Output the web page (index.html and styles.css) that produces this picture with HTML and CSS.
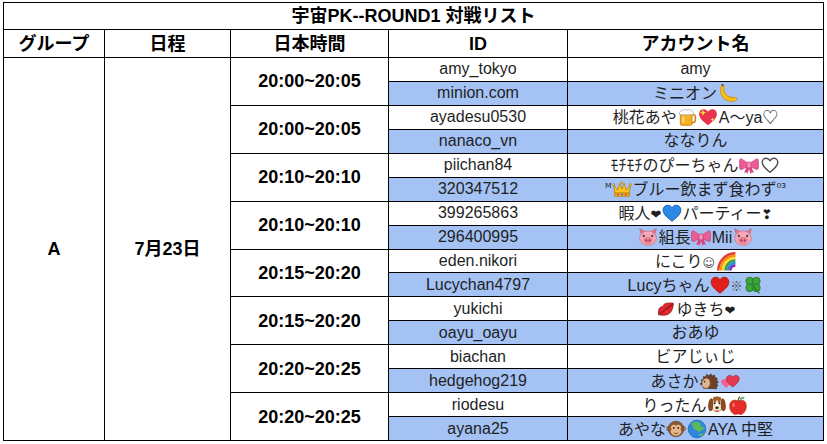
FILE: index.html
```html
<!DOCTYPE html>
<html lang="ja">
<head>
<meta charset="utf-8">
<title>宇宙PK--ROUND1 対戦リスト</title>
<link rel="stylesheet" href="styles.css">
</head>
<body>
<svg class="defs" xmlns="http://www.w3.org/2000/svg" aria-hidden="true">
  <symbol id="heart" viewBox="0 0 36 36">
    <path d="M18 33C12 28 2 21 2 12.5 2 7.5 6 4 10.5 4c3.3 0 5.8 2 7.5 4.5C19.7 6 22.2 4 25.5 4 30 4 34 7.5 34 12.5 34 21 24 28 18 33z"/>
  </symbol>
  <symbol id="e-banana" viewBox="0 0 36 36">
    <path d="M8 4c2 0 3 1 3 3s-1 3 0 7c2 8 9 12 18 12 3 0 5 1 5 3s-3 4-9 4C12 33 4 23 5 12c0-4 1-8 3-8z" fill="#fcc21b" stroke="#c68b0b" stroke-width="1.5"/>
    <path d="M9 12c1 9 8 15 18 16" fill="none" stroke="#e8a010" stroke-width="1.5"/>
    <rect x="6.5" y="2" width="3.5" height="4" rx="1" fill="#6b4a1e"/>
  </symbol>
  <symbol id="e-beer" viewBox="0 0 36 36">
    <path d="M26 14h3a4 4 0 0 1 4 4v6a4 4 0 0 1-4 4h-3" fill="none" stroke="#d08a10" stroke-width="3"/>
    <rect x="6" y="11" width="21" height="22" rx="3" fill="#f7b125" stroke="#c07a0a" stroke-width="1.5"/>
    <rect x="10" y="17" width="3" height="12" rx="1.5" fill="#fde08a"/>
    <path d="M5 14c-2-4 1-8 5-7 1-3 6-4 8-1 2-2 7-2 8 1 4 0 5 5 2 7z" fill="#fff" stroke="#9a9a9a" stroke-width="1.2"/>
  </symbol>
  <symbol id="e-sheart" viewBox="0 0 36 36">
    <use href="#heart" fill="#e8334a"/>
    <path d="M9 4l1.6 4.4L15 10l-4.4 1.6L9 16l-1.6-4.4L3 10l4.4-1.6z" fill="#ffd83b"/>
    <path d="M26 19l1 2.6 2.6 1-2.6 1-1 2.6-1-2.6-2.6-1 2.6-1z" fill="#ffe98a"/>
  </symbol>
  <symbol id="e-ribbon" viewBox="0 0 36 36">
    <path d="M15 19l-6 13 4-1 2 3 5-14z M21 19l6 13-4-1-2 3-5-14z" fill="#d6457f"/>
    <path d="M18 16L5 7c-2.5-1-4 1-4 3v13c0 2 1.5 4 4 3l13-6z" fill="#ea5c96" stroke="#c2306b" stroke-width="1"/>
    <path d="M18 16L31 7c2.5-1 4 1 4 3v13c0 2-1.5 4-4 3l-13-6z" fill="#ea5c96" stroke="#c2306b" stroke-width="1"/>
    <rect x="14" y="12.5" width="8" height="11" rx="3" fill="#f48fb8" stroke="#c2306b" stroke-width="1.2"/>
  </symbol>
  <symbol id="e-wheart" viewBox="0 0 36 36">
    <path d="M18 31C12.5 26.5 4 20.5 4 13c0-4 3.2-7 7-7 3 0 5.3 1.8 7 4.2C19.7 7.8 22 6 25 6c3.8 0 7 3 7 7 0 7.5-8.5 13.5-14 18z" fill="#fff" stroke="#4a4a4a" stroke-width="2.6"/>
  </symbol>
  <symbol id="e-crown" viewBox="0 0 36 36">
    <path d="M3 11l7 9 4-12 4 10 4-10 4 12 7-9-2 16H5z" fill="#fcc21b" stroke="#b07a08" stroke-width="1.3" stroke-linejoin="round"/>
    <rect x="5" y="25" width="26" height="6" fill="#f6a81c" stroke="#b07a08" stroke-width="1.3"/>
    <circle cx="3" cy="10" r="2" fill="#fcc21b" stroke="#b07a08"/>
    <circle cx="33" cy="10" r="2" fill="#fcc21b" stroke="#b07a08"/>
    <circle cx="18" cy="7" r="2" fill="#fcc21b" stroke="#b07a08"/>
    <circle cx="11" cy="28" r="1.8" fill="#e53935"/>
    <circle cx="18" cy="28" r="1.8" fill="#1e88e5"/>
    <circle cx="25" cy="28" r="1.8" fill="#e53935"/>
  </symbol>
  <symbol id="e-bheart" viewBox="0 0 36 36">
    <use href="#heart" fill="#2b8ae6" stroke="#0b4f9c" stroke-width="1.5"/>
  </symbol>
  <symbol id="e-rheart" viewBox="0 0 36 36">
    <use href="#heart" fill="#e0201b" stroke="#9c1010" stroke-width="1.2"/>
  </symbol>
  <symbol id="e-pig" viewBox="0 0 36 36">
    <path d="M3 3l11 6-7 8z M33 3l-11 6 7 8z" fill="#e6778c" stroke="#b9566a" stroke-width="1"/>
    <ellipse cx="18" cy="20" rx="15" ry="13" fill="#f7a8b8" stroke="#c9667a" stroke-width="1.2"/>
    <ellipse cx="18" cy="24" rx="7.5" ry="5.2" fill="#ee8598" stroke="#c9667a"/>
    <ellipse cx="15.3" cy="24" rx="1.4" ry="2.1" fill="#8a2c3f"/>
    <ellipse cx="20.7" cy="24" rx="1.4" ry="2.1" fill="#8a2c3f"/>
    <circle cx="10.5" cy="16" r="1.9" fill="#333"/>
    <circle cx="25.5" cy="16" r="1.9" fill="#333"/>
  </symbol>
  <symbol id="e-rainbow" viewBox="0 0 36 36">
    <g fill="none" stroke-width="4.4">
      <path d="M4 35A31 31 0 0 1 35 4" stroke="#e53935"/>
      <path d="M8.4 35A26.6 26.6 0 0 1 35 8.4" stroke="#fb8c00"/>
      <path d="M12.8 35A22.2 22.2 0 0 1 35 12.8" stroke="#fdd835"/>
      <path d="M17.2 35A17.8 17.8 0 0 1 35 17.2" stroke="#43a047"/>
      <path d="M21.6 35A13.4 13.4 0 0 1 35 21.6" stroke="#1e88e5"/>
      <path d="M26 35A9 9 0 0 1 35 26" stroke="#8e24aa"/>
    </g>
  </symbol>
  <symbol id="e-clover" viewBox="0 0 36 36">
    <g fill="#3aa53a" stroke="#1f6b1f" stroke-width="1.2">
      <circle cx="12" cy="11" r="7"/>
      <circle cx="24" cy="11" r="7"/>
      <circle cx="12" cy="23" r="7"/>
      <circle cx="24" cy="23" r="7"/>
    </g>
    <circle cx="18" cy="17" r="3" fill="#2e8b2e"/>
    <path d="M20 22c3 5 6 8 10 11" fill="none" stroke="#1f6b1f" stroke-width="2"/>
  </symbol>
  <symbol id="e-kiss" viewBox="0 0 36 36">
    <g transform="rotate(-38 18 18)">
      <path d="M1 18c5-8 10-10 13-8 2 1 3 1 4 0 3-2 9 0 17 8-6 7-12 10-17 10S7 25 1 18z" fill="#e0282e" stroke="#8b0f14" stroke-width="1.2"/>
      <path d="M3 18c5 1 10 1.5 15 0 5 1.5 10 1 15 0" stroke="#8b0f14" stroke-width="1.8" fill="none"/>
    </g>
  </symbol>
  <symbol id="e-hedgehog" viewBox="0 0 36 36">
    <path d="M8 31l-2-6 -3-1 3-4-2-4 4-1 0-5 4 1 2-5 4 3 3-4 3 4 4-2 1 5 4 1-1 4 3 3-3 3 2 4-3 2 1 3z" fill="#6b4226" stroke="#3e2410" stroke-width="1"/>
    <path d="M5 24c0-7 4-11 9-11 4 0 6 4 6 9 0 6-4 9-8 9-4 0-7-3-7-7z" fill="#e2b48a" stroke="#8a5a35" stroke-width="1"/>
    <circle cx="4" cy="23" r="1.8" fill="#222"/>
    <circle cx="10" cy="19" r="1.5" fill="#222"/>
  </symbol>
  <symbol id="e-twohearts" viewBox="0 0 36 36">
    <use href="#heart" x="0" y="0" width="20" height="20" transform="translate(1 12)" fill="#f06292"/>
    <use href="#heart" width="26" height="26" transform="translate(10 5)" fill="#e53950" stroke="#a5162b" stroke-width="1.5"/>
  </symbol>
  <symbol id="e-dog" viewBox="0 0 36 36">
    <ellipse cx="18" cy="17" rx="11" ry="13" fill="#f3e3cf" stroke="#7a4a22" stroke-width="1"/>
    <path d="M11 4c4-2 10-2 14 0 1 4-1 7-2 10h-10c-1-3-3-6-2-10z" fill="#a0612a"/>
    <path d="M8 6c-4 1-6 8-6 15 0 5 2 8 5 8 3 0 4-5 4-10 0-6 1-10-3-13z" fill="#8a4b21"/>
    <path d="M28 6c4 1 6 8 6 15 0 5-2 8-5 8-3 0-4-5-4-10 0-6-1-10 3-13z" fill="#8a4b21"/>
    <rect x="16.5" y="10" width="3" height="14" fill="#fff"/>
    <circle cx="13.5" cy="15" r="1.7" fill="#222"/>
    <circle cx="22.5" cy="15" r="1.7" fill="#222"/>
    <ellipse cx="18" cy="23" rx="3" ry="2.2" fill="#222"/>
    <path d="M15 28c1 4 5 4 6 0z" fill="#e53935"/>
  </symbol>
  <symbol id="e-apple" viewBox="0 0 36 36">
    <path d="M18 11c-4-3-15-3-15 9 0 9 6 15 10 15 2 0 3-1 5-1s3 1 5 1c4 0 10-6 10-15 0-12-11-12-15-9z" fill="#e52d27" stroke="#a5160f" stroke-width="1"/>
    <path d="M18 11c0-3 1-6 3-8" stroke="#6b3e1a" stroke-width="2" fill="none"/>
    <path d="M20 8c2-4 7-5 10-4-1 3-6 5-10 4z" fill="#4caf50"/>
    <ellipse cx="10" cy="18" rx="2" ry="3.5" fill="#ff8a80"/>
  </symbol>
  <symbol id="e-monkey" viewBox="0 0 36 36">
    <circle cx="5" cy="17" r="4.5" fill="#8a5a35"/>
    <circle cx="31" cy="17" r="4.5" fill="#8a5a35"/>
    <circle cx="5" cy="17" r="2.3" fill="#e6b98a"/>
    <circle cx="31" cy="17" r="2.3" fill="#e6b98a"/>
    <circle cx="18" cy="18" r="14" fill="#8a5a35" stroke="#5a3418" stroke-width="1"/>
    <path d="M18 12c-3-3-9-2-9 3 0 2 1 3 1 4-2 2-2 5 0 7 2 3 5 4 8 4s6-1 8-4c2-2 2-5 0-7 0-1 1-2 1-4 0-5-6-6-9-3z" fill="#e6b98a"/>
    <circle cx="14" cy="16" r="1.6" fill="#222"/>
    <circle cx="22" cy="16" r="1.6" fill="#222"/>
    <path d="M14 25c2 1.5 6 1.5 8 0" stroke="#5a3418" stroke-width="1.4" fill="none"/>
  </symbol>
  <symbol id="e-globe" viewBox="0 0 36 36">
    <circle cx="18" cy="18" r="16" fill="#2e86de" stroke="#1a5a9a" stroke-width="1"/>
    <path d="M9 7c4-2 10-3 14 0 3 2 1 5 3 7s5 0 6 3c-1 2-4 3-6 2-2 2-1 5-4 5-2-1-3-4-6-4-3 0-5-2-5-5s-4-4-2-8z" fill="#5cb85c"/>
    <path d="M22 27c2-2 6-2 7 0 0 2-3 4-5 4-2-1-3-2-2-4z" fill="#5cb85c"/>
  </symbol>
</svg>

<div class="sheet">
  <div class="cell title">宇宙PK--ROUND1 対戦リスト</div>

  <div class="cell head">グループ</div>
  <div class="cell head">日程</div>
  <div class="cell head">日本時間</div>
  <div class="cell head">ID</div>
  <div class="cell head">アカウント名</div>

  <div class="cell big span16">A</div>
  <div class="cell big span16">7月23日</div>

  <div class="cell big span2">20:00~20:05</div>
  <div class="cell">amy_tokyo</div>
  <div class="cell">amy</div>
  <div class="cell blue">minion.com</div>
  <div class="cell blue"><span>ミニオン<svg class="emo"><use href="#e-banana"/></svg></span></div>

  <div class="cell big span2">20:00~20:05</div>
  <div class="cell">ayadesu0530</div>
  <div class="cell"><span>桃花あや<svg class="emo"><use href="#e-beer"/></svg><svg class="emo"><use href="#e-sheart"/></svg>A～ya♡</span></div>
  <div class="cell blue">nanaco_vn</div>
  <div class="cell blue">ななりん</div>

  <div class="cell big span2">20:10~20:10</div>
  <div class="cell">piichan84</div>
  <div class="cell"><span>ﾓﾁﾓﾁのぴーちゃん<svg class="emo"><use href="#e-ribbon"/></svg><svg class="emo"><use href="#e-wheart"/></svg></span></div>
  <div class="cell blue">320347512</div>
  <div class="cell blue"><span><span class="sup">ᴹ</span><svg class="emo"><use href="#e-crown"/></svg>ブルー飲まず食わず<span class="sup">⁰³</span></span></div>

  <div class="cell big span2">20:10~20:10</div>
  <div class="cell">399265863</div>
  <div class="cell"><span>暇人<span class="sym">❤&#xFE0E;</span><svg class="emo"><use href="#e-bheart"/></svg>パーティー<span class="sym">❣&#xFE0E;</span></span></div>
  <div class="cell blue">296400995</div>
  <div class="cell blue"><span><svg class="emo"><use href="#e-pig"/></svg>組長<svg class="emo"><use href="#e-ribbon"/></svg>Mii<svg class="emo"><use href="#e-pig"/></svg></span></div>

  <div class="cell big span2">20:15~20:20</div>
  <div class="cell">eden.nikori</div>
  <div class="cell"><span>にこり<span class="sym small">☺&#xFE0E;</span><svg class="emo"><use href="#e-rainbow"/></svg></span></div>
  <div class="cell blue">Lucychan4797</div>
  <div class="cell blue"><span>Lucyちゃん<svg class="emo"><use href="#e-rheart"/></svg><span class="small">※</span><svg class="emo"><use href="#e-clover"/></svg></span></div>

  <div class="cell big span2">20:15~20:20</div>
  <div class="cell">yukichi</div>
  <div class="cell"><span><svg class="emo"><use href="#e-kiss"/></svg>ゆきち<span class="sym">❤&#xFE0E;</span></span></div>
  <div class="cell blue">oayu_oayu</div>
  <div class="cell blue">おあゆ</div>

  <div class="cell big span2">20:20~20:25</div>
  <div class="cell">biachan</div>
  <div class="cell">ビアじぃじ</div>
  <div class="cell blue">hedgehog219</div>
  <div class="cell blue"><span>あさか<svg class="emo"><use href="#e-hedgehog"/></svg><svg class="emo"><use href="#e-twohearts"/></svg></span></div>

  <div class="cell big span2">20:20~20:25</div>
  <div class="cell">riodesu</div>
  <div class="cell"><span>りったん<svg class="emo"><use href="#e-dog"/></svg><svg class="emo"><use href="#e-apple"/></svg></span></div>
  <div class="cell blue">ayana25</div>
  <div class="cell blue"><span>あやな<svg class="emo"><use href="#e-monkey"/></svg><svg class="emo"><use href="#e-globe"/></svg>AYA 中堅</span></div>
</div>
</body>
</html>
```

FILE: styles.css
```css
html, body {
  background: #ffffff;
}

body {
  margin: 2px 0 0 3px;
  font-family: "Liberation Sans", "Noto Sans CJK JP", "DejaVu Sans", sans-serif;
  color: #000000;
}

.defs {
  display: block;
  width: 0;
  height: 0;
  overflow: hidden;
}

.sheet {
  display: grid;
  grid-template-columns: 100px 125px 157px 178px 255px;
  grid-template-rows: 26px 27px repeat(16, 1fr);
  gap: 1px;
  padding: 1px;
  background: #000000;
  width: max-content;
  height: 439px;
  box-sizing: border-box;
}

.cell {
  background: #ffffff;
  display: flex;
  align-items: center;
  justify-content: center;
  font-size: 16px;
  line-height: 1;
  white-space: nowrap;
  color: #1f1f1f;
}

.blue {
  background: #a4c2f4;
}

.title,
.head,
.big {
  font-weight: bold;
  font-size: 18px;
  color: #000000;
}

.title {
  grid-column: 1 / -1;
}

.span16 {
  grid-row: span 16;
}

.span2 {
  grid-row: span 2;
}

.emo {
  width: 20px;
  height: 20px;
  margin: 0 0.5px;
  vertical-align: -4px;
}

.sym {
  font-family: "DejaVu Sans", sans-serif;
  font-size: 13px;
}

.sup {
  font-family: "DejaVu Sans", sans-serif;
  font-size: 12px;
  vertical-align: 3px;
}

.small {
  font-size: 12px;
  color: #444444;
}
```
